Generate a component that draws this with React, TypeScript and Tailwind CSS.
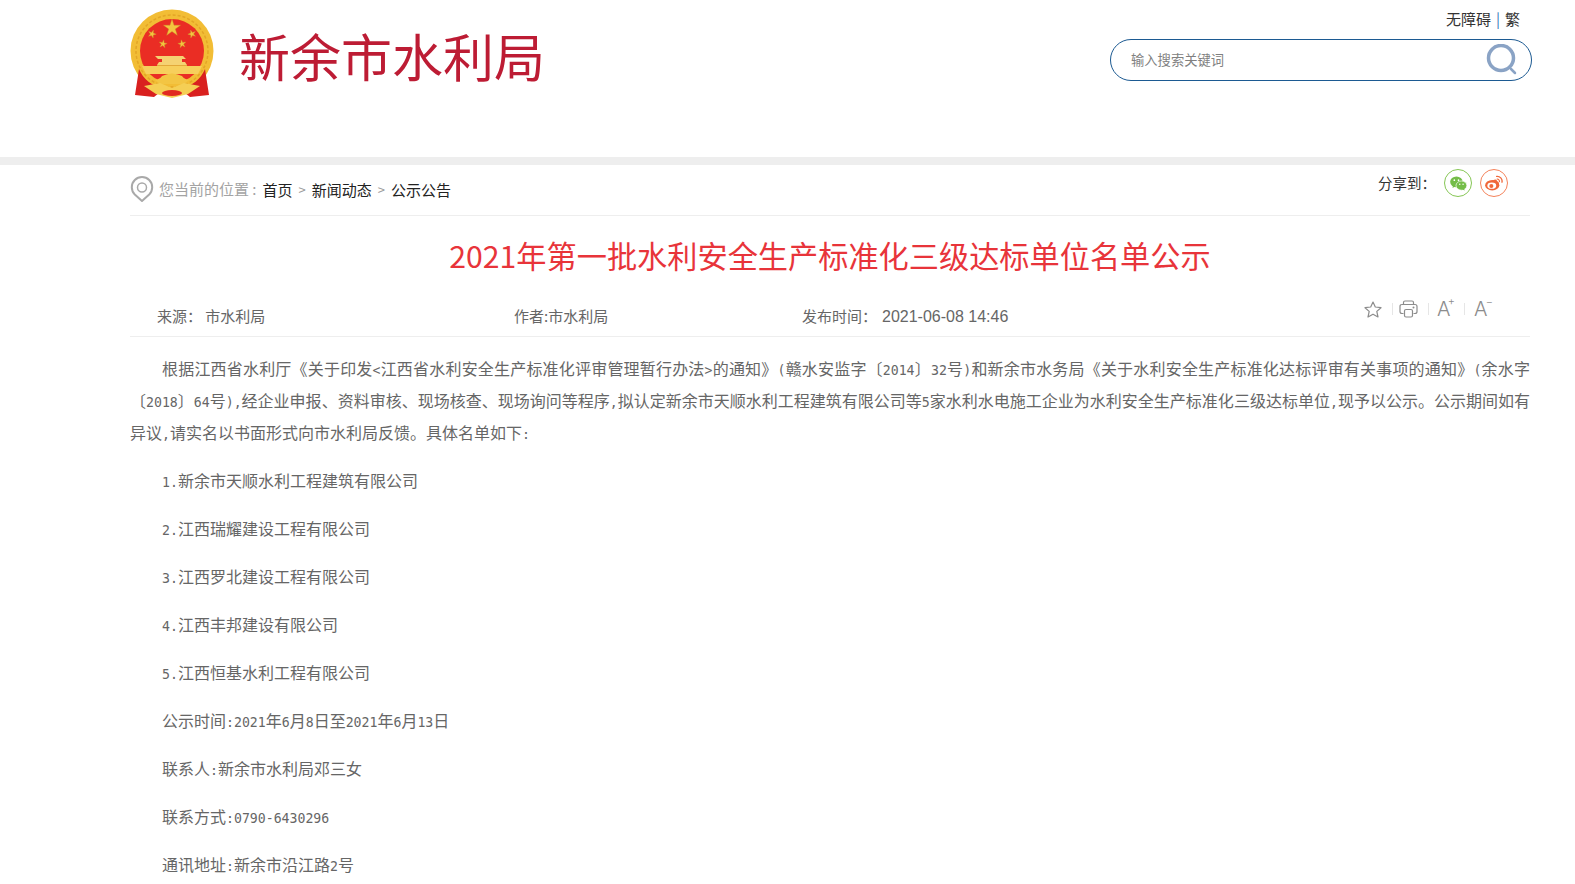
const intro =
  "根据江西省水利厅《关于印发<江西省水利安全生产标准化评审管理暂行办法>的通知》(赣水安监字〔2014〕32号)和新余市水务局《关于水利安全生产标准化达标评审有关事项的通知》(余水字〔2018〕64号),经企业申报、资料审核、现场核查、现场询问等程序,拟认定新余市天顺水利工程建筑有限公司等5家水利水电施工企业为水利安全生产标准化三级达标单位,现予以公示。公示期间如有异议,请实名以书面形式向市水利局反馈。具体名单如下:";

const lines = [
  "1.新余市天顺水利工程建筑有限公司",
  "2.江西瑞耀建设工程有限公司",
  "3.江西罗北建设工程有限公司",
  "4.江西丰邦建设有限公司",
  "5.江西恒基水利工程有限公司",
  "公示时间:2021年6月8日至2021年6月13日",
  "联系人:新余市水利局邓三女",
  "联系方式:0790-6430296",
  "通讯地址:新余市沿江路2号",
];

// latin runs in the body are half-width, same as the bitmap song face
function Mixed({ text }: { text: string }) {
  return (
    <>
      {text.split(/([\x00-\x7f]+)/).map((part, i) =>
        i % 2 ? (
          <span key={i} className="font-['DejaVu_Sans_Mono',monospace] text-[13.2px] leading-none">
            {part}
          </span>
        ) : (
          part
        ),
      )}
    </>
  );
}

function StarShape({ x, y, r, rot = 0 }: { x: number; y: number; r: number; rot?: number }) {
  const pts = [];
  for (let i = 0; i < 10; i++) {
    const rad = i % 2 ? r * 0.38 : r;
    const a = ((i * 36 - 90 + rot) * Math.PI) / 180;
    pts.push(`${x + rad * Math.cos(a)},${y + rad * Math.sin(a)}`);
  }
  return <polygon points={pts.join(" ")} fill="#f4c63f" stroke="#c9962a" strokeWidth="0.4" />;
}

function Emblem() {
  return (
    <svg width="86" height="90" viewBox="0 0 86 90" className="shrink-0">
      <circle cx="42" cy="42" r="41.500" fill="#f2bd35" />
      <circle cx="42" cy="42" r="36" fill="none" stroke="#e3a526" strokeWidth="1.500" strokeDasharray="3 2" />
      <circle cx="42" cy="42" r="32" fill="#ea2d24" />
      <StarShape x={42} y={19} r={9} />
      <StarShape x={22} y={25} r={4.200} rot={20} />
      <StarShape x={62} y={25} r={4.200} rot={-20} />
      <StarShape x={33} y={35} r={4.200} rot={10} />
      <StarShape x={52} y={35} r={4.200} rot={-10} />
      <path d="M31 47 h22 l3 3 h-4 v3 h3 l2 3 H27 l2 -3 h3 v-3 h-4 l-3 -3 Z" fill="#f5d272" />
      <path d="M27 56 h30 l0 1 H27 Z" fill="#e2a93a" />
      <path d="M12 57 H72 L68 65 H16 Z" fill="#f7cf5c" />
      <path d="M9 60 C13 70 22 77 34 80 L24 88 L5 86 Z" fill="#d9201f" />
      <path d="M75 60 C71 70 62 77 50 80 L60 88 L79 86 Z" fill="#d9201f" />
      <path d="M25 71 q5 -1 7 -4 q10 -5 20 0 q2 3 7 4 l-5 4 H30 Z" fill="#f3c543" />
      <path d="M14 77 L30 74 L42 79 L54 74 L70 77 L58 85 L42 89 L26 85 Z" fill="#f5cf55" />
      <ellipse cx="42" cy="84" rx="10" ry="3" fill="#e12a20" />
    </svg>
  );
}

function PinIcon() {
  return (
    <svg width="24" height="27" viewBox="0 0 24 27" fill="none" className="shrink-0">
      <path
        d="M12 25 L4.800 18.500 A10.200 10.200 0 1 1 19.200 18.500 Z"
        stroke="#a9a9a9"
        strokeWidth="2"
        strokeLinejoin="round"
      />
      <circle cx="12" cy="11.500" r="4.500" stroke="#a9a9a9" strokeWidth="1.500" />
    </svg>
  );
}

function SearchIcon() {
  return (
    <svg width="32" height="32" viewBox="0 0 32 32" fill="none">
      <circle cx="15" cy="14" r="12.500" stroke="#8aa3c5" strokeWidth="3.500" />
      <path d="M25 25 L29 29" stroke="#8aa3c5" strokeWidth="2.500" strokeLinecap="round" />
    </svg>
  );
}

function WechatIcon() {
  return (
    <svg width="17" height="15" viewBox="0 0 20 18">
      <ellipse cx="7.500" cy="7" rx="7.500" ry="6.500" fill="#74bd48" />
      <path d="M3.500 11 L2.800 14.500 L7 12 Z" fill="#74bd48" />
      <ellipse cx="13.500" cy="11.500" rx="6.500" ry="5.500" fill="#74bd48" stroke="#fff" strokeWidth="0.800" />
      <path d="M16.500 15 L17.500 17.500 L14 16 Z" fill="#74bd48" />
      <circle cx="5" cy="5" r="1" fill="#fff" />
      <circle cx="10" cy="5" r="1" fill="#fff" />
      <circle cx="11.500" cy="10" r="0.900" fill="#fff" />
      <circle cx="15.500" cy="10" r="0.900" fill="#fff" />
    </svg>
  );
}

function WeiboIcon() {
  return (
    <svg width="18" height="16" viewBox="0 0 20 18" fill="none">
      <ellipse cx="8" cy="11.500" rx="8" ry="5.800" fill="#f0683a" />
      <path d="M9 6 Q12 4 13 6 Q13.500 8 15 7.500 Q16 10 15 11 L8 8 Z" fill="#f0683a" />
      <ellipse cx="7.500" cy="12" rx="5" ry="3.500" fill="#fff" />
      <circle cx="7" cy="12.300" r="2.300" fill="#f0683a" />
      <path d="M13 1.500 A5.500 5.500 0 0 1 19 8" stroke="#f0683a" strokeWidth="1.500" strokeLinecap="round" />
      <path d="M13.500 4.500 A2.800 2.800 0 0 1 16.200 7.500" stroke="#f0683a" strokeWidth="1.200" strokeLinecap="round" />
    </svg>
  );
}

function StarIcon() {
  return (
    <svg width="18" height="17" viewBox="0 0 18 17" fill="none" className="shrink-0">
      <path
        d="M9 1 L11.300 6 L17 6.700 L12.800 10.400 L14 16 L9 13.200 L4 16 L5.200 10.400 L1 6.700 L6.700 6 Z"
        stroke="#8c8c8c"
        strokeWidth="1.200"
        strokeLinejoin="round"
      />
    </svg>
  );
}

function PrintIcon() {
  return (
    <svg width="19" height="18" viewBox="0 0 19 18" fill="none" className="shrink-0">
      <path d="M4.500 4.500 V2.500 Q4.500 1 6 1 H13 Q14.500 1 14.500 2.500 V4.500" stroke="#8c8c8c" strokeWidth="1.200" />
      <path
        d="M4.500 13.500 H3 Q1 13.500 1 11.500 V6.500 Q1 4.500 3 4.500 H16 Q18 4.500 18 6.500 V11.500 Q18 13.500 16 13.500 H14.500"
        stroke="#8c8c8c"
        strokeWidth="1.200"
      />
      <rect x="5.500" y="9.500" width="8" height="7.500" rx="1.500" stroke="#8c8c8c" strokeWidth="1.200" />
      <circle cx="14.500" cy="7.500" r="1" fill="#8c8c8c" />
    </svg>
  );
}

function Sep() {
  return <span className="h-[12px] w-px shrink-0 bg-[#e6e6e6]" />;
}

export default function App() {
  return (
    <div className="h-screen overflow-hidden bg-white font-['Noto_Sans_CJK_SC',sans-serif] text-[#333]">
      <header className="h-[157px] pl-[130px]">
        <div className="flex w-[1402px] items-start justify-between">
          <div className="flex items-start pt-[9px]">
            <Emblem />
            <h1 className="ml-[23px] mt-[8px] text-[51px] leading-[76px] font-normal text-[#bd1c34]">新余市水利局</h1>
          </div>
          <div className="w-[422px]">
            <div className="flex h-[39px] items-center justify-end pr-[12px] text-[15px] text-[#333]">
              无障碍
              <span className="mx-[5px] text-[#3b7fb8]">|</span>繁
            </div>
            <div className="flex h-[42px] items-center justify-between rounded-full border border-[#1c5a92] pl-[20px] pr-[13px]">
              <span className="text-[13.300px] text-[#808080]">输入搜索关键词</span>
              <SearchIcon />
            </div>
          </div>
        </div>
      </header>
      <div className="h-[8px] bg-[#eeeeee]" />

      <main className="ml-[130px] w-[1400px]">
        <div className="flex h-[51px] justify-between border-b border-[#eeeeee]">
          <div className="flex items-center pb-[1px] text-[15px]">
            <PinIcon />
            <span className="ml-[5px] text-[#a3a3a3]">您当前的位置 :</span>
            <span className="ml-[6px] mt-[1px] text-[#222]">首页</span>
            <span className="mx-[6px] text-[13px] text-[#999]">&gt;</span>
            <span className="mt-[1px] text-[#222]">新闻动态</span>
            <span className="mx-[6px] text-[13px] text-[#999]">&gt;</span>
            <span className="mt-[1px] text-[#222]">公示公告</span>
          </div>
          <div className="flex items-start gap-[8px] pr-[22px] pt-[4px]">
            <span className="text-[14.500px] leading-[28px] text-[#333]">分享到：</span>
            <span className="flex h-[28px] w-[28px] items-center justify-center rounded-full border border-[#86c655]">
              <WechatIcon />
            </span>
            <span className="flex h-[28px] w-[28px] items-center justify-center rounded-full border border-[#f4825a]">
              <WeiboIcon />
            </span>
          </div>
        </div>

        <h2 className="pt-[17px] text-center text-[30.200px] leading-[44px] font-normal text-[#e8343a]">
          2021年第一批水利安全生产标准化三级达标单位名单公示
        </h2>

        <div className="mt-[17px] flex h-[43px] items-start justify-between border-b border-[#eeeeee] pl-[27px] pr-[38px]">
          <div className="flex pt-[11px] text-[15px] leading-[22px] text-[#666]">
            <span className="w-[357px]">来源：&nbsp;市水利局</span>
            <span className="w-[288px]">作者:市水利局</span>
            <span>
              发布时间：<span className="ml-[5px] font-['Liberation_Sans',sans-serif] text-[16px]">2021-06-08 14:46</span>
            </span>
          </div>
          <div className="mt-[3px] flex h-[24px] items-center text-[#8c8c8c]">
            <StarIcon />
            <span className="ml-[10px] mr-[6px] flex"><Sep /></span>
            <PrintIcon />
            <span className="ml-[10px] mr-[8px] flex"><Sep /></span>
            <span className="relative w-[18px] font-['Inter',sans-serif] text-[20px] leading-[24px] font-light">
              A<span className="absolute right-0 -top-[1px] text-[11px] leading-[11px]">+</span>
            </span>
            <span className="ml-[9px] mr-[9px] flex"><Sep /></span>
            <span className="relative w-[18px] font-['Inter',sans-serif] text-[20px] leading-[24px] font-light">
              A<span className="absolute -right-[1px] top-[0px] text-[11px] leading-[11px]">−</span>
            </span>
          </div>
        </div>

        <article className="pt-[15px] text-[16px] leading-[32px] text-[#666]">
          <p className="mb-[16px] text-justify indent-[32px]">
            <Mixed text={intro} />
          </p>
          {lines.map((line) => (
            <p key={line} className="mb-[16px] indent-[32px]">
              <Mixed text={line} />
            </p>
          ))}
        </article>
      </main>
    </div>
  );
}
